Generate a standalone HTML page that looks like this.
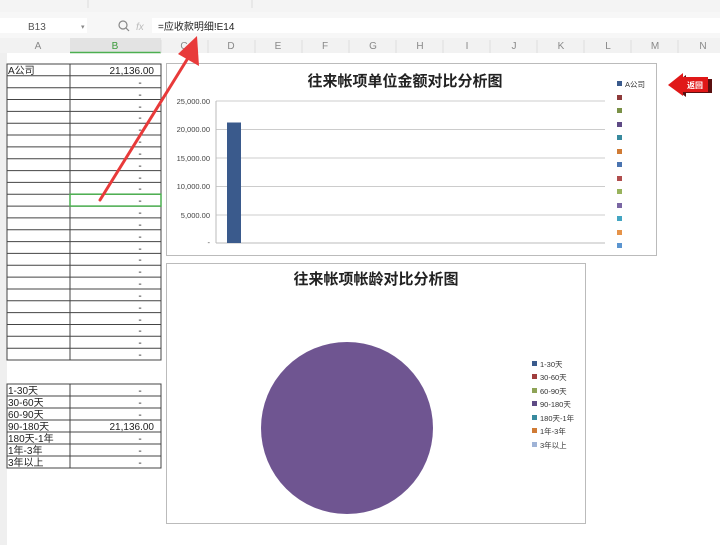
<!DOCTYPE html>
<html><head><meta charset="utf-8"><style>
html,body{margin:0;padding:0;width:720px;height:545px;overflow:hidden;background:#fff;font-family:"Liberation Sans","Noto Sans CJK SC",sans-serif}
svg text{font-family:"Liberation Sans","Noto Sans CJK SC",sans-serif}
</style></head><body>
<svg width="720" height="545" viewBox="0 0 720 545" xmlns="http://www.w3.org/2000/svg">
<!-- toolbar -->
<rect x="0" y="0" width="720" height="12" fill="#f4f4f4"/>
<line x1="88" y1="0" x2="88" y2="8" stroke="#ddd"/><line x1="252" y1="0" x2="252" y2="8" stroke="#ddd"/>
<rect x="0" y="12" width="720" height="26" fill="#f7f7f7"/>
<rect x="0" y="18" width="87" height="15" fill="#fff"/>
<text x="28" y="30" font-size="10" fill="#555" font-family="Liberation Mono">B13</text>
<text x="81" y="29" font-size="7" fill="#888">▾</text>
<circle cx="123" cy="25" r="4" fill="none" stroke="#888" stroke-width="1.2"/><line x1="126" y1="28" x2="129" y2="31" stroke="#888" stroke-width="1.2"/>
<text x="136" y="30" font-size="10" fill="#bbb" font-style="italic">fx</text>
<rect x="152" y="18" width="568" height="15" fill="#fff"/>
<text x="158" y="30" font-size="10" fill="#222" font-family="Liberation Mono,Noto Sans CJK SC">=应收款明细!E14</text>
<!-- column headers -->
<rect x="0" y="38" width="720" height="15" fill="#f2f2f2"/>
<rect x="70" y="38" width="91" height="15" fill="#e3e3e3"/>
<line x1="70" y1="52.5" x2="161" y2="52.5" stroke="#4caf50" stroke-width="1.5"/>
<g font-size="10" fill="#888" text-anchor="middle">
<text x="38" y="49">A</text><text x="115" y="49" fill="#3a9a3a">B</text><text x="184" y="49">C</text><text x="231" y="49">D</text><text x="278" y="49">E</text><text x="325" y="49">F</text><text x="373" y="49">G</text><text x="420" y="49">H</text><text x="467" y="49">I</text><text x="514" y="49">J</text><text x="561" y="49">K</text><text x="608" y="49">L</text><text x="655" y="49">M</text><text x="703" y="49">N</text>
</g>
<g stroke="#ddd"><line x1="161" y1="40" x2="161" y2="53"/><line x1="208" y1="40" x2="208" y2="53"/><line x1="255" y1="40" x2="255" y2="53"/><line x1="302" y1="40" x2="302" y2="53"/><line x1="349" y1="40" x2="349" y2="53"/><line x1="396" y1="40" x2="396" y2="53"/><line x1="443" y1="40" x2="443" y2="53"/><line x1="490" y1="40" x2="490" y2="53"/><line x1="537" y1="40" x2="537" y2="53"/><line x1="584" y1="40" x2="584" y2="53"/><line x1="631" y1="40" x2="631" y2="53"/><line x1="678" y1="40" x2="678" y2="53"/></g>
<!-- row header strip -->
<rect x="0" y="53" width="7" height="492" fill="#efefef"/>
<!-- table 1 -->
<g stroke="#444" stroke-width="1" fill="none">
<rect x="7" y="64" width="154" height="296"/>
<line x1="70" y1="64" x2="70" y2="360"/>
<path d="M7 75.8H161M7 87.7H161M7 99.5H161M7 111.4H161M7 123.2H161M7 135H161M7 146.9H161M7 158.7H161M7 170.6H161M7 182.4H161M7 194.2H161M7 206.1H161M7 217.9H161M7 229.8H161M7 241.6H161M7 253.4H161M7 265.3H161M7 277.1H161M7 289H161M7 300.8H161M7 312.6H161M7 324.5H161M7 336.3H161M7 348.2H161"/>
</g>
<rect x="70" y="194.2" width="91" height="11.9" fill="none" stroke="#4caf50" stroke-width="1.5"/>
<g font-size="10" fill="#222" font-family="Liberation Mono,Noto Sans CJK SC">
<text x="8" y="74">A公司</text><text x="154" y="74" text-anchor="end">21,136.00</text>
</g>
<g font-size="10" fill="#222" text-anchor="middle">
<text x="140" y="86">-</text><text x="140" y="98">-</text><text x="140" y="110">-</text><text x="140" y="121">-</text><text x="140" y="133">-</text><text x="140" y="145">-</text><text x="140" y="157">-</text><text x="140" y="169">-</text><text x="140" y="181">-</text><text x="140" y="192">-</text><text x="140" y="204">-</text><text x="140" y="216">-</text><text x="140" y="228">-</text><text x="140" y="240">-</text><text x="140" y="252">-</text><text x="140" y="263">-</text><text x="140" y="275">-</text><text x="140" y="287">-</text><text x="140" y="299">-</text><text x="140" y="311">-</text><text x="140" y="323">-</text><text x="140" y="334">-</text><text x="140" y="346">-</text><text x="140" y="358">-</text>
</g>
<!-- table 2 -->
<g stroke="#444" fill="none">
<rect x="7" y="384" width="154" height="84"/>
<line x1="70" y1="384" x2="70" y2="468"/>
<path d="M7 396H161M7 408H161M7 420H161M7 432H161M7 444H161M7 456H161"/>
</g>
<g font-size="10" fill="#222" font-family="Liberation Mono,Noto Sans CJK SC">
<text x="8" y="394">1-30天</text><text x="8" y="406">30-60天</text><text x="8" y="418">60-90天</text><text x="8" y="430">90-180天</text><text x="8" y="442">180天-1年</text><text x="8" y="454">1年-3年</text><text x="8" y="466">3年以上</text>
<text x="154" y="430" text-anchor="end">21,136.00</text>
</g>
<g font-size="10" fill="#222" text-anchor="middle"><text x="140" y="394">-</text><text x="140" y="406">-</text><text x="140" y="418">-</text><text x="140" y="442">-</text><text x="140" y="454">-</text><text x="140" y="466">-</text></g>
<!-- chart 1 -->
<rect x="166.5" y="63.5" width="490" height="192" fill="#fff" stroke="#bbb"/>
<text x="405" y="86" font-size="15" font-weight="bold" fill="#222" text-anchor="middle" font-family="Noto Serif CJK SC,serif">往来帐项单位金额对比分析图</text>
<g stroke="#ccc"><path d="M216 101H605M216 129.5H605M216 158H605M216 186.5H605M216 215H605"/></g>
<line x1="216" y1="101" x2="216" y2="243" stroke="#bbb"/>
<line x1="216" y1="243" x2="605" y2="243" stroke="#bbb"/>
<g font-size="7.5" fill="#444" text-anchor="end"><text x="210" y="104">25,000.00</text><text x="210" y="132">20,000.00</text><text x="210" y="161">15,000.00</text><text x="210" y="189">10,000.00</text><text x="210" y="218">5,000.00</text><text x="210" y="245">-</text></g>
<rect x="227" y="122.5" width="14" height="120.5" fill="#3a5a8c"/>
<g><rect x="617" y="81" width="5" height="5" fill="#3a5a8c"/><rect x="617" y="95" width="5" height="5" fill="#8e3a3a"/><rect x="617" y="108" width="5" height="5" fill="#7a9147"/><rect x="617" y="122" width="5" height="5" fill="#5e4a85"/><rect x="617" y="135" width="5" height="5" fill="#388a9e"/><rect x="617" y="149" width="5" height="5" fill="#d07b35"/><rect x="617" y="162" width="5" height="5" fill="#4a74b0"/><rect x="617" y="176" width="5" height="5" fill="#b04d4d"/><rect x="617" y="189" width="5" height="5" fill="#98b35c"/><rect x="617" y="203" width="5" height="5" fill="#7a66a3"/><rect x="617" y="216" width="5" height="5" fill="#43a5c2"/><rect x="617" y="230" width="5" height="5" fill="#e69349"/><rect x="617" y="243" width="5" height="5" fill="#5b95d0"/></g>
<text x="625" y="87" font-size="7.5" fill="#333">A公司</text>
<!-- chart 2 -->
<rect x="166.5" y="263.5" width="419" height="260" fill="#fff" stroke="#bbb"/>
<text x="376" y="284" font-size="15" font-weight="bold" fill="#222" text-anchor="middle" font-family="Noto Serif CJK SC,serif">往来帐项帐龄对比分析图</text>
<ellipse cx="347" cy="428" rx="86" ry="86" fill="#6f5591"/>
<g><rect x="532" y="361" width="5" height="5" fill="#3a5a8c"/><rect x="532" y="374" width="5" height="5" fill="#a03d3d"/><rect x="532" y="388" width="5" height="5" fill="#8ea356"/><rect x="532" y="401" width="5" height="5" fill="#5e4a85"/><rect x="532" y="415" width="5" height="5" fill="#388a9e"/><rect x="532" y="428" width="5" height="5" fill="#d07b35"/><rect x="532" y="442" width="5" height="5" fill="#9fb3d6"/></g>
<g font-size="7.5" fill="#333"><text x="540" y="367">1-30天</text><text x="540" y="380">30-60天</text><text x="540" y="394">60-90天</text><text x="540" y="407">90-180天</text><text x="540" y="421">180天-1年</text><text x="540" y="434">1年-3年</text><text x="540" y="448">3年以上</text></g>
<!-- return button -->
<path d="M672 86 L686 75 L686 79 L712 79 L712 93 L686 93 L686 97 Z" fill="#5a1010"/>
<path d="M668 85 L683 73 L683 77 L708 77 L708 92 L683 92 L683 96 Z" fill="#e01818"/>
<text x="695" y="88" font-size="8" font-weight="bold" fill="#fff" text-anchor="middle">返回</text>
<!-- red arrow -->
<line x1="100" y1="200" x2="188" y2="58" stroke="#e83a3a" stroke-width="3" stroke-linecap="round"/>
<path d="M197 36 L199 66 L178 54 Z" fill="#e83a3a"/>
</svg>
</body></html>
